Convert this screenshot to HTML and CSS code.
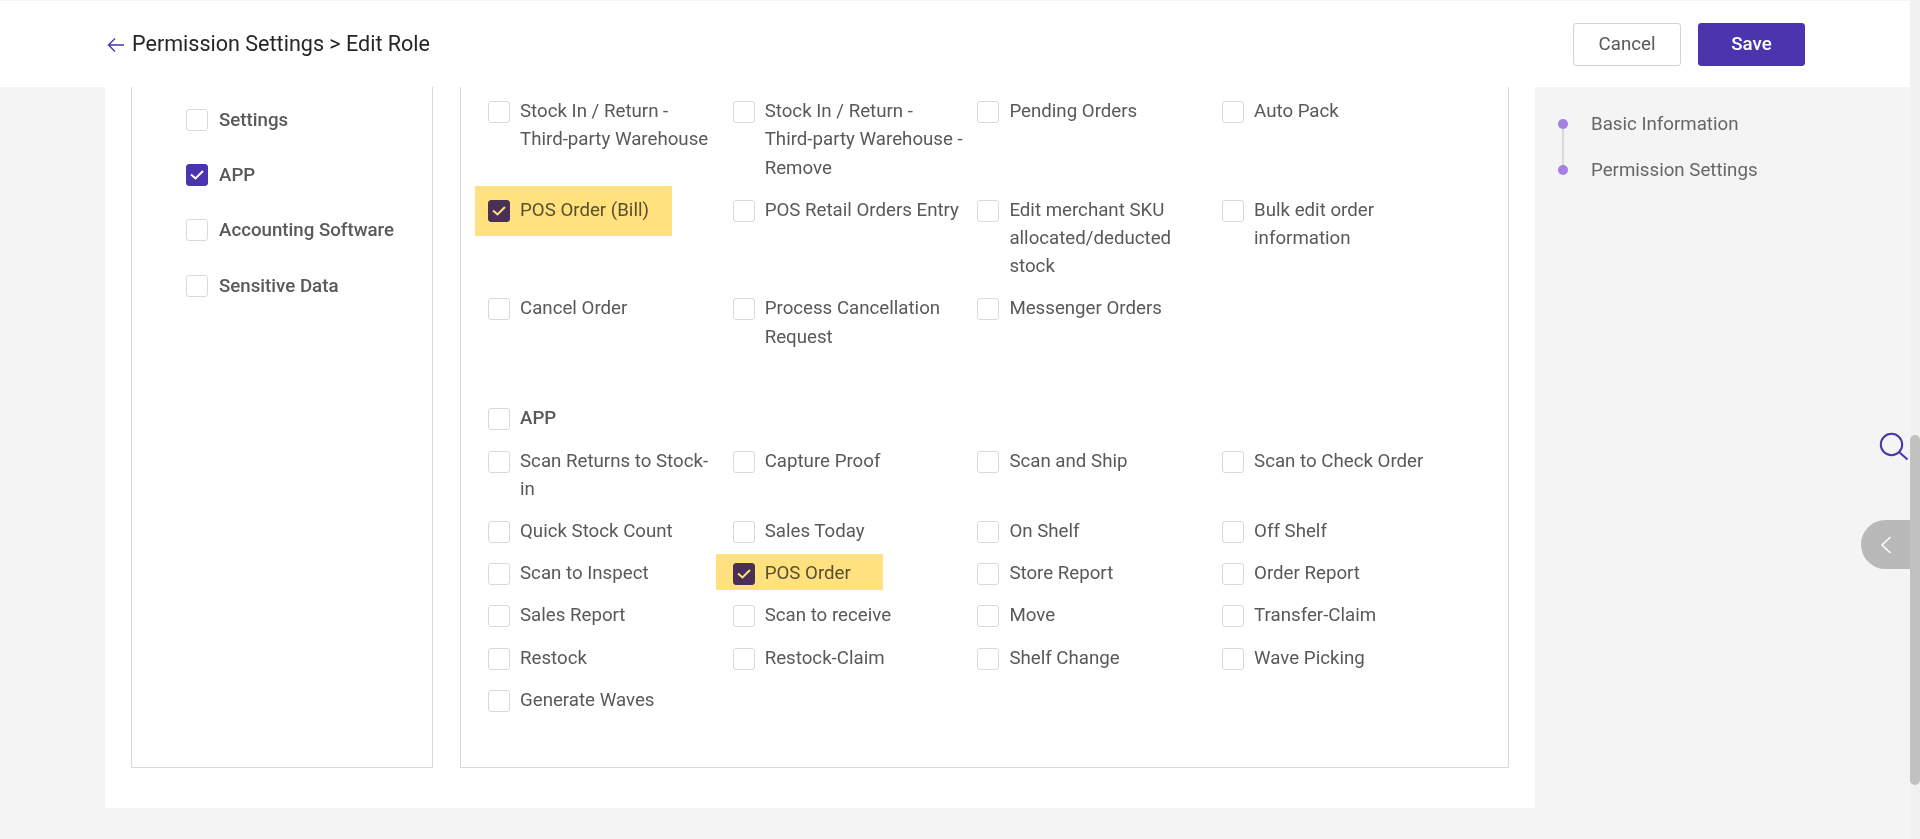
FILE: index.html
```html
<!DOCTYPE html>
<html lang="en">
<head>
<meta charset="utf-8">
<title>Edit Role</title>
<link rel="stylesheet" href="styles.css">
</head>
<body>
<div class="page">
  <header class="topbar">
    <div class="crumb">
      <svg class="back" width="18" height="16" viewBox="0 0 18 16"><path d="M17 8H1.500M8 1.500 1.500 8 8 14.500" fill="none" stroke="#4a35ae" stroke-width="1.400"/></svg>
      <span>Permission Settings &gt; Edit Role</span>
    </div>
    <div class="actions">
      <button class="btn cancel">Cancel</button>
      <button class="btn primary">Save</button>
    </div>
  </header>
  <main class="body">
    <section class="card">
      <div class="panel left">
        <label class="cat"><i class="box"></i>Settings</label>
        <label class="cat"><i class="box on"><svg width="14" height="12" viewBox="0 0 14 12"><path d="M1 5.500l4.500 4L13 2" fill="none" stroke="#fff" stroke-width="2"/></svg></i>APP</label>
        <label class="cat"><i class="box"></i>Accounting Software</label>
        <label class="cat"><i class="box"></i>Sensitive Data</label>
      </div>
      <div class="panel right">
        <div class="grid">
          <label class="item"><i class="box"></i><span>Stock In / Return -<br>Third-party Warehouse</span></label>
          <label class="item"><i class="box"></i><span>Stock In / Return -<br>Third-party Warehouse - Remove</span></label>
          <label class="item"><i class="box"></i><span>Pending Orders</span></label>
          <label class="item"><i class="box"></i><span>Auto Pack</span></label>
          <label class="item"><b class="mark mark-bill"></b><i class="box on"><svg width="14" height="12" viewBox="0 0 14 12"><path d="M1 5.500l4.500 4L13 2" fill="none" stroke="#fff" stroke-width="2"/></svg></i><span>POS Order (Bill)</span></label>
          <label class="item"><i class="box"></i><span>POS Retail Orders Entry</span></label>
          <label class="item"><i class="box"></i><span>Edit merchant SKU allocated/deducted stock</span></label>
          <label class="item"><i class="box"></i><span>Bulk edit order information</span></label>
          <label class="item"><i class="box"></i><span>Cancel Order</span></label>
          <label class="item"><i class="box"></i><span>Process Cancellation Request</span></label>
          <label class="item"><i class="box"></i><span>Messenger Orders</span></label>
        </div>
        <label class="item group-head"><i class="box"></i><span>APP</span></label>
        <div class="grid">
          <label class="item"><i class="box"></i><span>Scan Returns to Stock-<br>in</span></label>
          <label class="item"><i class="box"></i><span>Capture Proof</span></label>
          <label class="item"><i class="box"></i><span>Scan and Ship</span></label>
          <label class="item"><i class="box"></i><span>Scan to Check Order</span></label>
          <label class="item"><i class="box"></i><span>Quick Stock Count</span></label>
          <label class="item"><i class="box"></i><span>Sales Today</span></label>
          <label class="item"><i class="box"></i><span>On Shelf</span></label>
          <label class="item"><i class="box"></i><span>Off Shelf</span></label>
          <label class="item"><i class="box"></i><span>Scan to Inspect</span></label>
          <label class="item"><b class="mark mark-pos"></b><i class="box on"><svg width="14" height="12" viewBox="0 0 14 12"><path d="M1 5.500l4.500 4L13 2" fill="none" stroke="#fff" stroke-width="2"/></svg></i><span>POS Order</span></label>
          <label class="item"><i class="box"></i><span>Store Report</span></label>
          <label class="item"><i class="box"></i><span>Order Report</span></label>
          <label class="item"><i class="box"></i><span>Sales Report</span></label>
          <label class="item"><i class="box"></i><span>Scan to receive</span></label>
          <label class="item"><i class="box"></i><span>Move</span></label>
          <label class="item"><i class="box"></i><span>Transfer-Claim</span></label>
          <label class="item"><i class="box"></i><span>Restock</span></label>
          <label class="item"><i class="box"></i><span>Restock-Claim</span></label>
          <label class="item"><i class="box"></i><span>Shelf Change</span></label>
          <label class="item"><i class="box"></i><span>Wave Picking</span></label>
          <label class="item"><i class="box"></i><span>Generate Waves</span></label>
        </div>
      </div>
    </section>
    <nav class="anchors">
      <a class="anchor">Basic Information</a>
      <a class="anchor">Permission Settings</a>
    </nav>
  </main>
  <svg class="search" width="30" height="30" viewBox="0 0 30 30"><circle cx="12.500" cy="12.500" r="10.700" fill="none" stroke="#4a35ae" stroke-width="2"/><path d="M20 20l8.500 7.500" stroke="#4a35ae" stroke-width="2"/></svg>
  <div class="handle"><svg width="12" height="20" viewBox="0 0 12 20"><path d="M10.500 2 2 10l8.500 8" fill="none" stroke="#fff" stroke-width="1.500"/></svg></div>
  <div class="scrollbar"><div class="thumb"></div></div>
</div>
</body>
</html>
```
FILE: styles.css
```css
* { box-sizing: border-box; }
html, body { margin: 0; height: 100%; overflow: hidden; }
body { font-family: Roboto, "Liberation Sans", sans-serif; font-size: 18.700px; line-height: 28.400px; color: #595959; background: #f4f4f4; }
.page { position: relative; height: 839px; padding-right: 10px; padding-top: 1px; }
.topbar { height: 86px; background: #fff; display: flex; align-items: center; justify-content: space-between; padding: 0 105px 0 107px; }
.crumb { display: flex; align-items: center; gap: 7px; font-size: 21.550px; color: #262626; padding-top: 1px; }
.back { display: block; }
.actions { display: flex; gap: 17px; }
.btn { width: 107px; height: 43px; border: 1px solid #d4d4d4; border-radius: 3px; background: #fff; color: #595959; font: 400 18.700px Roboto, sans-serif; padding: 0; }
.btn.cancel { width: 108px; }
.btn.primary { background: #4a35ae; border-color: #4a35ae; color: #fff; font-weight: 500; }
.body { display: flex; height: 752px; }
.card { margin-left: 105px; width: 1430px; height: 721px; background: #fff; display: flex; gap: 27px; padding: 0 26px; }
.panel { border: 1px solid #d9d9d9; border-top: 0; height: 681px; }
.panel.left { width: 302px; padding: 19px 0 0 54px; display: flex; flex-direction: column; gap: 26.800px; }
.panel.right { width: 1049px; padding: 10px 0 0 27px; }
.box { flex: none; width: 22px; height: 22px; border: 1px solid #d9d9d9; border-radius: 3px; background: #fff; display: flex; align-items: center; justify-content: center; margin-top: 4px; }
.box.on { background: #4a35ae; border-color: #4a35ae; }
.cat { display: flex; gap: 11px; font-weight: 500; }
.cat .box { margin-top: 3px; }
.grid { display: grid; grid-template-columns: repeat(4, 244.700px); row-gap: 13.400px; }
.item { position: relative; display: flex; gap: 10px; }
.item span { width: 203px; }
.group-head { margin: 53px 0 14.300px; font-weight: 500; }
.grid + .group-head + .grid { row-gap: 13.700px; }
.mark { position: absolute; background: #ffe27f; mix-blend-mode: multiply; }
.mark-bill { left: -13px; top: -9.500px; width: 197px; height: 50px; }
.mark-pos { left: -17px; top: -5.500px; width: 167px; height: 36px; }
.anchors { margin-left: 56px; padding-top: 22.500px; position: relative; display: flex; flex-direction: column; gap: 17.700px; color: #666; }
.anchor { position: relative; display: block; }
.anchor::before { content: ""; position: absolute; left: -33px; top: 9px; width: 10px; height: 10px; border-radius: 50%; background: #a67fe0; }
.anchor:first-child::after { content: ""; position: absolute; left: -29px; top: 19px; width: 2px; height: 36px; background: #d9d9d9; }
.search { position: absolute; left: 1879px; top: 432px; }
.handle { position: absolute; left: 1861px; top: 520px; width: 49px; height: 49px; border-radius: 25px 0 0 25px; background: #b9b9b9; display: flex; align-items: center; padding-left: 19px; }
.scrollbar { position: absolute; right: 0; top: 0; width: 10px; height: 839px; background: #f1f1f1; padding-top: 435px; }
.thumb { height: 350px; border-radius: 5px; background: #c1c1c1; }
```
